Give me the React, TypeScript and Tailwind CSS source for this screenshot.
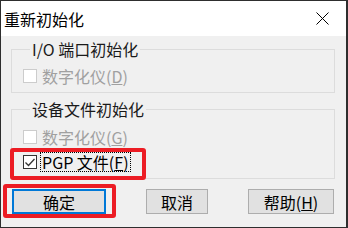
import React from "react";

const F = { fontFamily: '"Noto Sans CJK SC", "Noto Sans", sans-serif' };

function Check({ checked, disabled }: { checked?: boolean; disabled?: boolean }) {
  return (
    <div
      className={`w-[14px] h-[14px] border flex items-center justify-center shrink-0 ${
        disabled ? "border-[#cccccc] bg-white" : "border-[#333333] bg-white"
      }`}
    >
      {checked && (
        <svg width="12" height="12" viewBox="0 0 12 12">
          <path d="M1.5 6.5 L4.5 9.5 L10.5 3" fill="none" stroke="#333" strokeWidth="1.3" />
        </svg>
      )}
    </div>
  );
}

export default function App() {
  return (
    <div
      className="relative w-[348px] h-[228px] border border-[#2e2e2e] border-r-2 bg-[#f0f0f0] flex flex-col overflow-hidden"
      style={F}
    >
      {/* title bar */}
      <div className="h-[35px] bg-white flex items-center justify-between pl-[3px] pr-[17px] shrink-0">
        <span className="text-[16px] leading-[20px] text-black">重新初始化</span>
        <svg width="13" height="13" viewBox="0 0 13 13">
          <path d="M0.5 0.5 L12.5 12.5 M12.5 0.5 L0.5 12.5" stroke="#000" strokeWidth="1" />
        </svg>
      </div>

      <div className="flex flex-col px-[10px]">
        {/* group 1 */}
        <fieldset className="mt-[4px] w-[324px] border border-[#dcdcdc] pl-[11px] pt-[8px] pb-[6px]">
          <legend className="ml-[7px] px-[2px] text-[16px] leading-[18px] text-[#1a1a1a]">
            I/O 端口初始化
          </legend>
          <div className="h-[20px] flex items-center gap-[5px]">
            <Check disabled />
            <span className="text-[16px] leading-[20px] text-[#a0a0a0]">
              数字化仪(<span className="underline">D</span>)
            </span>
          </div>
        </fieldset>

        {/* group 2 */}
        <fieldset className="mt-[7px] w-[324px] border border-[#dcdcdc] pl-[11px] pt-[9px] pb-[6px] flex flex-col gap-[5px]">
          <legend className="ml-[7px] px-[2px] text-[16px] leading-[18px] text-[#1a1a1a]">
            设备文件初始化
          </legend>
          <div className="h-[20px] flex items-center gap-[5px]">
            <Check disabled />
            <span className="text-[16px] leading-[20px] text-[#a0a0a0]">
              数字化仪(<span className="underline">G</span>)
            </span>
          </div>
          <div className="h-[20px] flex items-center gap-[3px]">
            <Check checked />
            <span className="text-[16px] leading-[18px] text-black border border-dotted border-black px-[1px]">
              PGP 文件(<span className="underline">F</span>)
            </span>
          </div>
        </fieldset>

        {/* buttons */}
        <div className="mt-[10px] flex items-center">
          <button className="ml-[1px] w-[94px] h-[25px] border-2 border-[#0078d7] bg-[#e1e1e1] text-[16px] leading-[20px] text-black">
            确定
          </button>
          <button className="ml-[40px] w-[62px] h-[25px] border border-[#adadad] bg-[#e1e1e1] text-[16px] leading-[20px] text-black">
            取消
          </button>
          <button className="ml-[40px] w-[86px] h-[25px] border border-[#adadad] bg-[#e1e1e1] text-[16px] leading-[20px] text-black">
            帮助(<span className="underline">H</span>)
          </button>
        </div>
      </div>

      {/* red highlight overlays */}
      <div className="absolute left-[9px] top-[147px] w-[136px] h-[32px] border-4 border-[#ec1c24] rounded-[3px]" />
      <div className="absolute left-[2px] top-[183px] w-[113px] h-[34px] border-4 border-[#ec1c24] rounded-[3px]" />
    </div>
  );
}
